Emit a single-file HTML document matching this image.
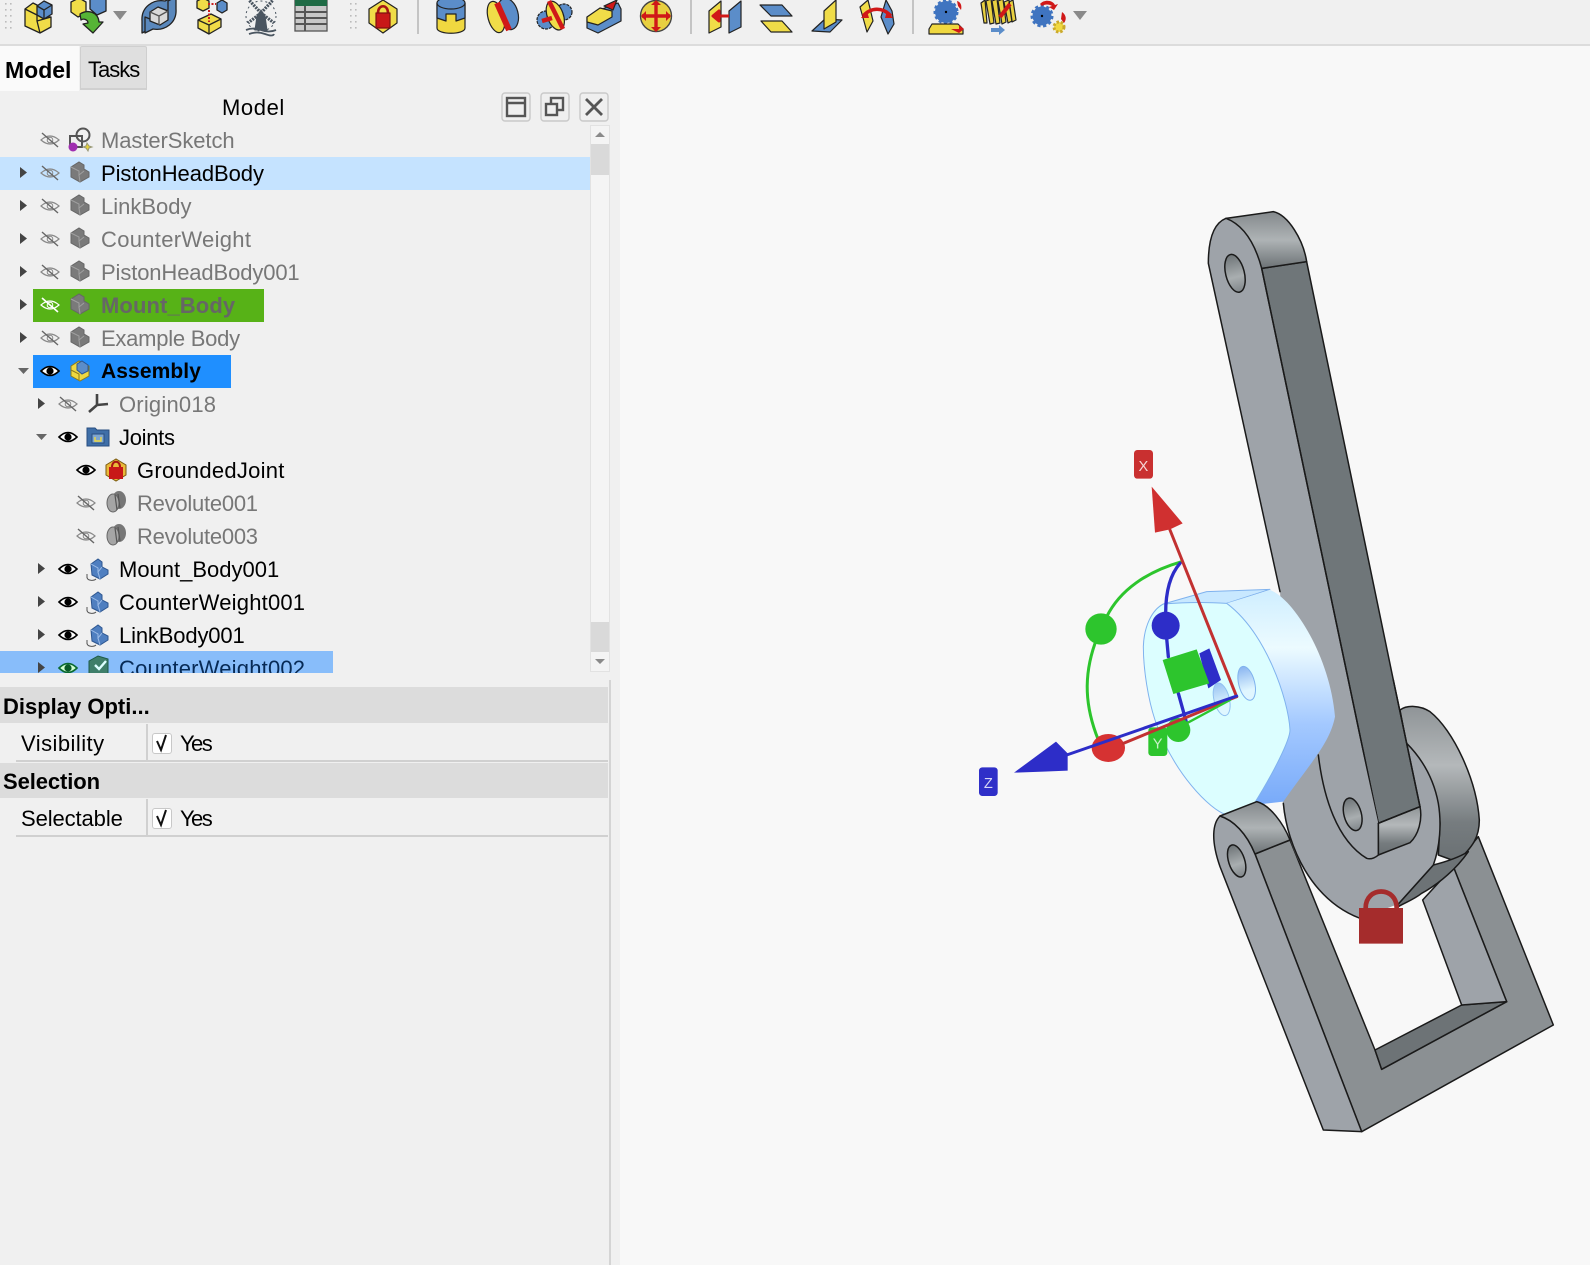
<!DOCTYPE html>
<html><head><meta charset="utf-8"><title>Assembly</title>
<style>
html,body{margin:0;padding:0;background:#f0f0f0}
#root{position:relative;width:1590px;height:1265px;overflow:hidden;background:#f0f0f0;font-family:"Liberation Sans",sans-serif;color:#000}
#root>*{position:absolute}
#view{left:620px;top:46px;width:970px;height:1219px;background:#f8f8f8}
#tbline{left:0;top:44px;width:1590px;height:2px;background:#dcdcdc}
.tab{font-size:22px;line-height:44px}
#tree{left:0;top:124px;width:590px;height:549px;overflow:hidden}
.r{position:absolute;height:33px;line-height:34px;font-size:22px;white-space:nowrap}
.g{color:#777}
svg{overflow:visible}
.pt{font-weight:bold;font-size:22px;left:3px}
.pl{font-size:22px;left:21px}
.cb{width:18px;height:19px;left:152px;background:#fff;border:1px solid #c8c8c8;border-radius:3px}
</style></head><body><div id="root">
<div id="view"></div>
<div id="tbline"></div>

<!-- Toolbar -->
<svg style="left:0;top:0" width="1590" height="44" viewBox="0 0 1590 44">
<defs>
<g id="dots"><g fill="#bbb"><rect x="-3" y="0" width="1.6" height="1.6"/><rect x="2" y="0" width="1.6" height="1.6"/><rect x="-3" y="6" width="1.6" height="1.6"/><rect x="2" y="6" width="1.6" height="1.6"/><rect x="-3" y="12" width="1.6" height="1.6"/><rect x="2" y="12" width="1.6" height="1.6"/><rect x="-3" y="18" width="1.6" height="1.6"/><rect x="2" y="18" width="1.6" height="1.6"/><rect x="-3" y="24" width="1.6" height="1.6"/><rect x="2" y="24" width="1.6" height="1.6"/></g></g>
</defs>
<use href="#dots" x="8" y="3"/><use href="#dots" x="353" y="3"/>
<g fill="#c4c4c4"><rect x="417" y="0" width="2" height="34"/><rect x="690" y="0" width="2" height="34"/><rect x="912" y="0" width="2" height="34"/></g>
<g fill="#8a8a8a"><path d="M113,11h14l-7,9z"/><path d="M1073,11h14l-7,9z"/></g>
<g stroke="#222" stroke-width="1.3" stroke-linejoin="round">
<!-- 1 part -->
<g transform="translate(38,15)"><path d="M-13,-6 L-5,-12 L1,-9 L1,1 L13,2 L13,12 L2,18 L-13,11Z" fill="#f0dc48"/><path d="M-13,-6 L-1,0 L-1,6 L13,2 M-1,6 L2,18" fill="none"/><path d="M-1,-9 L6,-14 L14,-10 L14,-1 L6,4 L-1,0Z" fill="#5b8dc9"/><path d="M-1,-9 L6,-5 L14,-10 M6,-5 V4" fill="none"/></g>
<!-- 2 link -->
<g transform="translate(88,14)"><path d="M-17,-12 L-9,-16 L-2,-12 L-2,-1 L-10,3 L-17,-2Z" fill="#f0dc48"/><path d="M2,-16 L10,-19 L18,-15 L18,-3 L9,1 L2,-5Z" fill="#5b8dc9"/><path d="M-8,0 C0,-5 10,-2 11,8 L15,8 L5,19 L-5,10 L0,9 C0,6 -4,4 -7,6Z" fill="#56b436"/></g>
<!-- 3 sync -->
<g transform="translate(159,15)"><path d="M-17,6 C-18,-8 -6,-16 6,-14 L14,-18 L14,-2 L4,-6 C-4,-7 -9,-1 -9,6 L-9,14 L-17,18Z" fill="#5a88bc"/><path d="M17,-6 C18,8 6,16 -6,14 L-14,18 L-14,2 L-4,6 C4,7 9,1 9,-6 L9,-14 L17,-18Z" fill="#5a88bc"/><path d="M-9,-3 L-1,-8 L9,-4 L9,5 L1,10 L-9,6Z" fill="#d9d9d9"/><path d="M-9,-3 L0,1 L9,-4 M0,1 V10" fill="none" stroke="#555"/></g>
<!-- 4 -->
<g transform="translate(210,15)"><path d="M-13,-14 L-7,-17 L-1,-14 L-1,-7 L-7,-4 L-13,-7Z" fill="#f0dc48"/><path d="M7,-12 L12,-15 L17,-12 L17,-5 L12,-2 L7,-5Z" fill="#5b8dc9"/><path d="M-12,5 L1,-1 L11,4 L11,12 L-1,19 L-12,13Z" fill="#f0dc48"/><path d="M-12,5 L-1,10 L11,4 M-1,10 V19" fill="none"/><path d="M-2,-11 H6 M-1,-5 V7" stroke="#c81e1e" stroke-dasharray="2 1.5" stroke-width="2" fill="none"/></g>
</g>
<!-- 5 windmill -->
<g transform="translate(261,15)" fill="none" stroke="#4a5560"><g stroke-width="3.2"><path d="M0,-2 L-12,-15 M0,-2 L12,-15" stroke-dasharray="2 1"/><path d="M0,-2 L-13,8 M0,-2 L13,8" stroke-dasharray="2 1"/></g><path d="M-4,1 L-6,15 H6 L4,1 L0,-5Z" fill="#4a5560"/><circle r="15" cy="1" stroke-width="1" stroke-dasharray="2 3"/><path d="M-15,15 Q-8,12 0,15 T15,15 M-12,19 Q-4,16 4,19 T13,19" stroke-width="1.8"/></g>
<!-- 6 sheet -->
<g transform="translate(311,15)"><rect x="-16" y="-15" width="32" height="31" fill="#c8c8c8" stroke="#555" stroke-width="1.3"/><rect x="-16" y="-15" width="32" height="6" fill="#1f6b45"/><path d="M-16,-3H16M-16,3H16M-16,9H16M-6,-9V16" stroke="#555" stroke-width="2"/></g>
<g stroke="#222" stroke-width="1.2" stroke-linejoin="round">
<!-- 7 lock -->
<g transform="translate(383,15)"><path d="M-14,-6 L0,-15 L14,-6 L14,8 L0,18 L-14,8Z" fill="#f0dc48"/><path d="M-5,-2 C-5,-11 5,-11 5,-2" fill="none" stroke="#a81414" stroke-width="2.6"/><rect x="-7" y="-2" width="14" height="15" fill="#c81818" stroke="#801010"/></g>
<!-- 8 cylinder -->
<g transform="translate(451,15)"><path d="M-14,-12 L-14,13 C-14,20 14,20 14,13 L14,-12Z" fill="#f0d840"/><path d="M-14,-12 L-14,3 L-5,6 L-5,-1 L5,-1 L5,6 L14,3 L14,-12Z" fill="#5b8dc9"/><ellipse cy="-12" rx="14" ry="6" fill="#5b8dc9"/></g>
<!-- 9 revolute -->
<g transform="translate(502,15)"><ellipse cx="6" cy="-1" rx="10" ry="16" transform="rotate(-15 6 -1)" fill="#5b8dc9"/><ellipse cx="-6" cy="2" rx="8" ry="16" transform="rotate(-15 -6 2)" fill="#f0dc48"/><path d="M-5,-12 L7,15" stroke="#d01818" stroke-width="6"/></g>
<!-- 10 -->
<g transform="translate(554,15)"><circle cx="-8" cy="5" r="9" fill="#5b8dc9" stroke-dasharray="3 1"/><circle cx="10" cy="-3" r="8" fill="#5b8dc9" stroke-dasharray="3 1"/><ellipse cx="1" cy="1" rx="8" ry="15" transform="rotate(-20)" fill="#f0dc48"/><path d="M-5,-14 L9,14 M-12,6 L-2,3" stroke="#d01818" stroke-width="4.5"/></g>
<!-- 11 slider -->
<g transform="translate(604,15)"><path d="M-17,2 L-2,-6 L14,-12 L17,-6 L17,6 L-6,18 L-17,13Z" fill="#5b8dc9"/><path d="M-17,2 L-4,-7 L8,-4 L8,2 L-6,10 L-17,7Z" fill="#f0dc48"/><path d="M0,-9 L13,-15 L9,-5Z" fill="#d01818"/></g>
<!-- 12 ball -->
<g transform="translate(656,15)"><circle r="15.5" cy="1" fill="#e8d040" stroke="#444" stroke-width="1.4"/><path d="M-14,1H14M0,-13V15" stroke="#d01818" stroke-width="3.4" fill="none"/><path d="M-15,1l5,-5v10zM15,1l-5,-5v10zM0,-15l-5,5h10zM0,17l-5,-5h10z" fill="#d01818" stroke="none"/></g>
<!-- 13 distance -->
<g transform="translate(725,15)"><path d="M-16,-4 L-4,-14 L-4,12 L-16,18Z" fill="#f0dc48"/><path d="M4,-4 L16,-14 L16,12 L4,18Z" fill="#5b8dc9"/><path d="M-12,1H4M-12,1l6,-5v10z" stroke="#d01818" stroke-width="3" fill="#d01818"/></g>
<!-- 14 parallel -->
<g transform="translate(776,15)"><path d="M-16,-10 H6 L16,1 H-5Z" fill="#5b8dc9"/><path d="M-16,4 H5 L15,15 H-6Z" fill="#f0dc48" transform="translate(1,2)"/></g>
<!-- 15 perpendicular -->
<g transform="translate(826,15)"><path d="M-14,16 L-1,4 L16,5 L4,17Z" fill="#5b8dc9"/><path d="M-2,-4 L10,-15 L10,7 L-2,14Z" fill="#f0dc48"/></g>
<!-- 16 angle -->
<g transform="translate(877,15)"><path d="M-17,-8 L-9,-15 L-4,6 L-10,17Z" fill="#f0dc48"/><path d="M9,-15 L15,-4 L17,9 L11,19 L4,2Z" fill="#5b8dc9"/><path d="M-14,1 C-6,-8 6,-8 14,1" stroke="#d01818" stroke-width="3.4" fill="none"/><path d="M-16,3l6,-7 2,7zM16,3l-6,-7 -2,7z" fill="#d01818" stroke="none"/></g>
<!-- 17 rack -->
<g transform="translate(946,15)"><circle cy="-3" r="11" fill="#3f74c0" stroke="#3f74c0" stroke-width="3" stroke-dasharray="3 2.4"/><circle cy="-3" r="1.2" fill="#000" stroke="none"/><path d="M-17,14 L-14,9 H12 L17,14 V19 H-17Z" fill="#f0d840"/><path d="M5,14 H13 V10 L18,14 L13,18Z" fill="#d01818" stroke="none"/><path d="M11,-14 C15,-13 16,-9 15,-5 L12,-9Z" fill="#d01818" stroke="none"/></g>
<!-- 18 screw -->
<g transform="translate(998,15)"><path d="M-17,-12 L-13,-15 L-11,8 L-14,8Z M-12,-14 L-7,-16 L-4,8 L-8,9Z M-6,-14 L-1,-16 L2,8 L-2,9Z M0,-14 L5,-16 L8,7 L4,9Z M6,-13 L11,-15 L14,6 L10,8Z M11,-13 L15,-15 L18,5 L14,7Z" fill="#e8d040"/><path d="M2,2 L12,-11" stroke="#d01818" stroke-width="4"/><path d="M-7,13 H1 V10 L7,15 L1,20 V17 H-7Z" fill="#5b8dc9" stroke="none"/></g>
<!-- 19 gears -->
<g transform="translate(1049,15)"><circle cx="-7" cy="1" r="9.5" fill="#3f74c0" stroke="#3f74c0" stroke-width="4" stroke-dasharray="3 2.4"/><circle cx="-7" cy="1" r="1.2" fill="#000" stroke="none"/><circle cx="10" cy="12" r="5" fill="#f0d840" stroke="#caa92c" stroke-width="3" stroke-dasharray="2.4 1.8"/><path d="M-9,-11 C-5,-16 4,-15 6,-10 L9,-11 L5,-5 L0,-8 L3,-9 C0,-11 -4,-11 -7,-9Z" fill="#d01818" stroke="none"/><path d="M13,-3 C17,0 18,4 15,8 L12,4Z" fill="#d01818" stroke="none"/></g>
</g>
</svg>

<!-- Tabs -->
<div style="left:0;top:46px;width:79px;height:45px;background:#fafafa"></div>
<div style="left:80px;top:46px;width:67px;height:44px;background:#dfdfdf;border:1px solid #cfcfcf;border-bottom:2px solid #d0d0d0;box-sizing:border-box;border-radius:2px 2px 0 0"></div>
<div class="tab" style="left:5px;top:48px;font-weight:bold;font-size:23px">Model</div>
<div class="tab" style="left:88px;top:48px;letter-spacing:-1px">Tasks</div>
<div style="left:222px;top:92px;font-size:22px;line-height:32px;letter-spacing:.6px">Model</div>

<!-- dock buttons -->
<svg style="left:500px;top:90px" width="112" height="34" viewBox="500 90 112 34">
<g fill="#efefef" stroke="#c9c9c9" stroke-width="1.4"><rect x="502" y="93" width="28" height="28" rx="3"/><rect x="541" y="93" width="28" height="28" rx="3"/><rect x="580" y="93" width="28" height="28" rx="3"/></g>
<g fill="none" stroke="#555" stroke-width="2.4"><rect x="507" y="98" width="18" height="18"/><path d="M507,103H525"/><rect x="551" y="98" width="12" height="12"/><rect x="546" y="104" width="11" height="11" fill="#efefef"/><path d="M586,99L602,115M602,99L586,115" stroke-width="2.8"/></g>
</svg>

<!-- tree -->
<svg width="0" height="0" style="left:0;top:0">
<defs>
<symbol id="eye" viewBox="-10 -8 20 16" overflow="visible"><path d="M-9,0 Q0,-9 9,0 Q0,9 -9,0Z" fill="#fff" stroke="#000" stroke-width="1.6"/><circle r="3.6" fill="#000"/></symbol>
<symbol id="eyex" viewBox="-10 -8 20 16" overflow="visible"><path d="M-9,0 Q0,-8 9,0 Q0,8 -9,0Z" fill="none" stroke="#888" stroke-width="1.2"/><circle r="2.8" fill="none" stroke="#888"/><path d="M-8,-7 L8,7" stroke="#666" stroke-width="1.4"/></symbol>
<symbol id="body" viewBox="-10 -11 20 22" overflow="visible"><path d="M-9,-5 L-1,-10 L4,-7 L4,-3 L9,0 L9,5 L0,10 L-9,5Z" fill="#7a7a7a" stroke="#666"/><path d="M-9,-5 L-1,-1 L-1,3 L4,-1 M-1,3 L0,10" stroke="#a0a0a0" fill="none"/></symbol>
<symbol id="blue" viewBox="-12 -11 24 22" overflow="visible"><path d="M-7,-5 L0,-10 L4,-7 L4,-2 L10,1 L10,5 L2,10 L-6,6Z" fill="#4f7fc0" stroke="#2d5690"/><path d="M-7,-5 L0,-1 L0,3 L4,-2 M0,3 L2,10" stroke="#9dbde8" fill="none"/><path d="M-11,8 C-11,12 -4,12 -2,10" stroke="#555" fill="none"/><path d="M-11,5 V9" stroke="#555"/></symbol>
<symbol id="rev" viewBox="-11 -11 22 22" overflow="visible"><ellipse cx="3" cy="-2" rx="7" ry="9" fill="#777"/><ellipse cx="-3" cy="1" rx="6" ry="9" fill="#a5a5a5" stroke="#666"/><path d="M-1,-7 L1,8 M2,-8 L4,6" stroke="#555" stroke-width="1.2"/></symbol>
</defs></svg>

<div id="tree">
<div class="r" style="left:0;top:33px;width:590px;background:#c5e3ff"></div>
<div class="r" style="left:33px;top:165px;width:231px;background:#57b217"></div>
<div class="r" style="left:33px;top:231px;width:198px;background:#1f8fff"></div>
<div class="r" style="left:0;top:527px;width:333px;background:#88bdfa"></div>

<svg style="position:absolute;left:0;top:0" width="590" height="560">
<!-- arrows -->
<g fill="#444" transform="translate(0,1)"><path d="M20,42l7,5.5l-7,5.5zM20,75l7,5.5l-7,5.5zM20,108l7,5.5l-7,5.5zM20,141l7,5.5l-7,5.5zM20,174l7,5.5l-7,5.5zM20,207l7,5.5l-7,5.5z"/><path d="M18,243h11l-5.5,6z" fill="#666"/><path d="M38,273l7,5.5l-7,5.5z"/><path d="M36,309h11l-5.5,6z" fill="#666"/><path d="M38,438l7,5.5l-7,5.5zM38,471l7,5.5l-7,5.5zM38,504l7,5.5l-7,5.5zM38,537l7,5.5l-7,5.5z"/></g>
<!-- eyes -->
<g transform="translate(-1,0)">
<use href="#eyex" x="41" y="8" width="20" height="16"/>
<use href="#eyex" x="41" y="41" width="20" height="16"/>
<use href="#eyex" x="41" y="74" width="20" height="16"/>
<use href="#eyex" x="41" y="107" width="20" height="16"/>
<use href="#eyex" x="41" y="140" width="20" height="16"/>
<g transform="translate(51,181)"><path d="M-9,0 Q0,-8 9,0 Q0,8 -9,0Z" fill="none" stroke="#fff" stroke-width="1.2"/><circle r="2.8" fill="none" stroke="#fff"/><path d="M-8,-7 L8,7" stroke="#fff" stroke-width="1.6"/></g>
<use href="#eyex" x="41" y="206" width="20" height="16"/>
<use href="#eye" x="41" y="239" width="20" height="16"/>
<use href="#eyex" x="59" y="272" width="20" height="16"/>
<use href="#eye" x="59" y="305" width="20" height="16"/>
<use href="#eye" x="77" y="338" width="20" height="16"/>
<use href="#eyex" x="77" y="371" width="20" height="16"/>
<use href="#eyex" x="77" y="404" width="20" height="16"/>
<use href="#eye" x="59" y="437" width="20" height="16"/>
<use href="#eye" x="59" y="470" width="20" height="16"/>
<use href="#eye" x="59" y="503" width="20" height="16"/>
<g transform="translate(69,544)"><path d="M-9,0 Q0,-9 9,0 Q0,9 -9,0Z" fill="#d0ffd0" stroke="#0a6a30" stroke-width="1.6"/><circle r="3.6" fill="#0a5a28"/></g>
</g>
<!-- icons -->
<g transform="translate(80,15)"><rect x="-10" y="-3" width="12" height="11" fill="none" stroke="#555" stroke-width="2"/><circle cx="3" cy="-4" r="6.5" fill="none" stroke="#555" stroke-width="2"/><circle cx="-7" cy="8" r="4.5" fill="#a02fb0"/><path d="M7,4 l2,3 3,1 -3,1 -1,3 -2,-3 -3,-1 3,-1z" fill="#e6d23a" stroke="#997"/></g>
<use href="#body" x="70" y="37" width="20" height="22"/>
<use href="#body" x="70" y="70" width="20" height="22"/>
<use href="#body" x="70" y="103" width="20" height="22"/>
<use href="#body" x="70" y="136" width="20" height="22"/>
<use href="#body" x="70" y="169" width="20" height="22"/>
<use href="#body" x="70" y="202" width="20" height="22"/>
<g transform="translate(80,247)"><path d="M-9,-5 L-1,-10 L9,-5 L9,5 L0,10 L-9,5Z" fill="#efd840" stroke="#8a7a20"/><path d="M-3,-7 L2,-10 L8,-6 L8,0 L2,3 L-3,-1Z" fill="#5b8dc9" stroke="#2d5690"/><path d="M-9,-1 L-1,3 L-1,9" fill="none" stroke="#8a7a20"/></g>
<g transform="translate(98,280)" stroke="#444" stroke-width="2.6" fill="none"><path d="M-1,-10 V1 L10,0 M-1,1 L-9,8"/></g>
<g transform="translate(98,313)"><path d="M-11,-9 H-3 L-1,-7 H11 V9 H-11Z" fill="#3f6fa8" stroke="#284e80"/><rect x="-6" y="-3" width="12" height="9" fill="#7ea6cf" stroke="#284e80"/><path d="M-3,0 V4 H3 V0" fill="none" stroke="#efd840" stroke-width="1.4"/></g>
<g transform="translate(116,346)"><path d="M-10,-5 L0,-11 L10,-5 L10,5 L0,11 L-10,5Z" fill="#eab93a" stroke="#7a5a10"/><path d="M-4,-3 C-4,-10 4,-10 4,-3" fill="none" stroke="#a81414" stroke-width="2"/><rect x="-7" y="-3" width="14" height="12" fill="#c81818"/></g>
<use href="#rev" x="105" y="367" width="22" height="22"/>
<use href="#rev" x="105" y="400" width="22" height="22"/>
<use href="#blue" x="86" y="434" width="24" height="22"/>
<use href="#blue" x="86" y="467" width="24" height="22"/>
<use href="#blue" x="86" y="500" width="24" height="22"/>
<g transform="translate(98,543)"><path d="M-9,-6 L0,-11 L10,-8 L10,8 L-9,8Z" fill="#3f7f6a" stroke="#1d5a48"/><path d="M-3,-2 L1,2 L8,-6" stroke="#dff" stroke-width="2.4" fill="none"/></g>
</svg>

<div class="r g" style="left:101px;top:0;letter-spacing:-.08px">MasterSketch</div>
<div class="r" style="left:101px;top:33px;letter-spacing:-.07px">PistonHeadBody</div>
<div class="r g" style="left:101px;top:66px">LinkBody</div>
<div class="r g" style="left:101px;top:99px;letter-spacing:.3px">CounterWeight</div>
<div class="r g" style="left:101px;top:132px;letter-spacing:-.12px">PistonHeadBody001</div>
<div class="r" style="left:101px;top:165px;font-weight:bold;color:#666;letter-spacing:.1px">Mount_Body</div>
<div class="r g" style="left:101px;top:198px;letter-spacing:-.25px">Example Body</div>
<div class="r" style="left:101px;top:231px;font-weight:bold;font-size:21px;letter-spacing:.1px">Assembly</div>
<div class="r g" style="left:119px;top:264px;letter-spacing:.2px">Origin018</div>
<div class="r" style="left:119px;top:297px;letter-spacing:-.3px">Joints</div>
<div class="r" style="left:137px;top:330px;letter-spacing:.25px">GroundedJoint</div>
<div class="r g" style="left:137px;top:363px;letter-spacing:-.25px">Revolute001</div>
<div class="r g" style="left:137px;top:396px;letter-spacing:-.25px">Revolute003</div>
<div class="r" style="left:119px;top:429px">Mount_Body001</div>
<div class="r" style="left:119px;top:462px;letter-spacing:.2px">CounterWeight001</div>
<div class="r" style="left:119px;top:495px;letter-spacing:-.15px">LinkBody001</div>
<div class="r" style="left:119px;top:528px;color:#072a55;letter-spacing:.2px">CounterWeight002</div>
</div>

<!-- scrollbar -->
<div style="left:590px;top:125px;width:20px;height:547px;background:#f4f4f4;border:1px solid #e2e2e2;box-sizing:border-box"></div>
<div style="left:591px;top:144px;width:18px;height:31px;background:#d9d9d9"></div>
<div style="left:591px;top:622px;width:18px;height:30px;background:#d9d9d9"></div>
<svg style="left:590px;top:125px" width="20" height="547"><path d="M5,12h10l-5,-5zM5,534h10l-5,5z" fill="#8a8a8a"/></svg>

<!-- properties -->
<div style="left:609px;top:680px;width:2px;height:585px;background:#d4d4d4"></div>
<div style="left:0;top:687px;width:608px;height:36px;background:#dcdcdc"></div>
<div style="left:0;top:763px;width:608px;height:35px;background:#dcdcdc"></div>
<div style="left:16px;top:760px;width:592px;height:2px;background:#d0d0d0"></div>
<div style="left:16px;top:835px;width:592px;height:2px;background:#d0d0d0"></div>
<div style="left:146px;top:724px;width:2px;height:37px;background:#d0d0d0"></div>
<div style="left:146px;top:799px;width:2px;height:37px;background:#d0d0d0"></div>
<div class="pt" style="top:692px;line-height:30px">Display Opti...</div>
<div class="pt" style="top:767px;line-height:30px;letter-spacing:-.1px">Selection</div>
<div class="pl" style="top:729px;line-height:30px;letter-spacing:.45px">Visibility</div>
<div class="pl" style="top:804px;line-height:30px;letter-spacing:-.1px">Selectable</div>
<div class="cb" style="top:733px"></div><div class="cb" style="top:808px"></div>
<svg style="left:150px;top:730px" width="24" height="100"><g fill="none" stroke="#111" stroke-width="2"><path d="M7,11 L11,20 L16,5"/><path d="M7,86 L11,95 L16,80"/></g></svg>
<div style="left:180px;top:729px;font-size:22px;line-height:30px;letter-spacing:-1.6px">Yes</div>
<div style="left:180px;top:804px;font-size:22px;line-height:30px;letter-spacing:-1.6px">Yes</div>

<!-- 3D view -->
<svg style="left:0;top:0" width="1590" height="1265" viewBox="0 0 1590 1265">
<defs>
<linearGradient id="cap" x1="0" y1="0" x2="0" y2="1"><stop offset="0" stop-color="#84898c"/><stop offset=".5" stop-color="#aeb3b5"/><stop offset="1" stop-color="#6c7275"/></linearGradient>
<linearGradient id="rim" x1="0" y1="0" x2="0" y2="1"><stop offset="0" stop-color="#8f9497"/><stop offset=".38" stop-color="#b4b8ba"/><stop offset=".75" stop-color="#767c7f"/><stop offset="1" stop-color="#6a7073"/></linearGradient>
<linearGradient id="hole" x1="0" y1="0" x2="0" y2="1"><stop offset="0" stop-color="#6e7477"/><stop offset=".6" stop-color="#a9aeb0"/><stop offset="1" stop-color="#80868a"/></linearGradient>
<linearGradient id="wrim" x1="0" y1="0" x2="0" y2="1"><stop offset="0" stop-color="#cfeeff"/><stop offset=".27" stop-color="#ecfbff"/><stop offset=".62" stop-color="#a4c9ff"/><stop offset="1" stop-color="#78aaf9"/></linearGradient>
<linearGradient id="whole" x1="0" y1="0" x2="0" y2="1"><stop offset="0" stop-color="#8ab5f0"/><stop offset=".7" stop-color="#e0f6ff"/></linearGradient>
</defs>
<g transform="translate(1190,200) scale(.33333)" stroke="#1a1a1a" stroke-width="4.5" stroke-linejoin="round" stroke-linecap="round">

<!-- yoke (z8) -->
<g transform="translate(0,1440)">
<path d="M195,522 L300,480 L555,1110 L575,1168 L950,965 L790,560 L865,470 L1090,1035 L515,1355Z" fill="#8b9093"/>
<path d="M555,1110 L815,975 L950,965 L575,1168Z" fill="#6d7376"/>
<path d="M698,660 L790,560 L950,965 L815,975Z" fill="#9ea3a9"/>
</g>

<!-- big plate + rim (z8) -->
<g transform="translate(0,1440)">
<path d="M630,90 C650,75 690,75 720,95 C790,150 860,300 868,420 C868,470 850,500 800,545 L745,525 L750,430 C745,330 700,250 650,195Z" fill="url(#rim)"/>
<path d="M625,672 L730,555 C770,545 810,530 835,515 C800,565 750,610 695,640 C670,660 640,670 625,680Z" fill="#6d7376"/>
<path d="M278,370 C290,500 360,660 510,715 L625,672 L730,555 C750,500 755,430 745,370 C730,290 690,230 650,190 L600,-50 L300,200Z" fill="#9ea3a9" stroke="none"/>
<path d="M280,370 C292,500 365,660 510,715" fill="none"/>
<path d="M625,672 L730,555 C750,500 755,430 745,370 C730,290 690,230 650,190" fill="none"/>
</g>

<!-- upper link (z7) -->
<path d="M108,55 C70,70 55,120 55,190 L270,1175 L300,1660 L560,1960 L565,1870 L475,1440 L215,205 C195,130 160,75 108,55Z" fill="#9ea3a9" stroke="none"/>
<path d="M215,205 L350,185 L610,1440 L690,1820 L565,1870 L475,1440Z" fill="#6f7679"/>
<path d="M108,55 C70,70 55,120 55,190 L270,1175" fill="none"/>
<path d="M215,205 L475,1440 L565,1870" fill="none"/>
<path d="M108,55 L250,35 C295,45 340,120 350,185 L215,205 C195,130 160,75 108,55Z" fill="url(#cap)"/>
<ellipse cx="135" cy="220" rx="28" ry="58" transform="rotate(-14 135 220)" fill="url(#hole)"/>
<g transform="translate(0,1440)">
<path d="M565,430 L690,380 C698,420 685,465 660,488 L565,525Z" fill="url(#rim)"/>
<path d="M385,225 C400,350 440,480 530,535 C545,540 560,530 565,525 L565,430 L470,0 L380,100Z" fill="#9ea3a9" stroke="none"/>
<path d="M385,225 C400,350 440,480 530,535 C545,540 560,530 565,525 L565,430" fill="none"/>
<path d="M565,430 L690,380 M610,0 L690,380" fill="none"/>
<ellipse cx="488" cy="403" rx="26" ry="50" transform="rotate(-15 488 403)" fill="url(#hole)"/>
</g>

<!-- wheel + gizmo (z6) -->
<g transform="translate(-690,720)" stroke="#7fb2ee" stroke-width="3">
<path d="M610,492 L740,455 L930,448 L800,490Z" fill="#c8e8ff"/>
<path d="M800,490 L930,450 C1000,475 1110,650 1125,830 C1110,910 1050,970 970,1085 L880,1095 C940,1000 990,900 990,870 C985,780 920,580 800,490Z" fill="url(#wrim)" stroke="none"/>
<path d="M610,492 C700,485 760,488 800,490 C920,580 985,780 990,870 C990,900 940,1000 880,1095 L800,1125 C750,1110 640,1000 585,840 C565,780 550,690 550,620 C552,560 575,510 610,492Z" fill="#dcfeff"/>
<ellipse cx="860" cy="730" rx="24" ry="52" transform="rotate(-14 860 730)" fill="url(#whole)"/>
<ellipse cx="785" cy="778" rx="23" ry="50" transform="rotate(-14 785 778)" fill="url(#whole)" opacity=".8"/>
<g stroke="none">
<path d="M665,365 C560,395 480,450 440,530" fill="none" stroke="#2dc52d" stroke-width="9"/>
<path d="M405,610 C370,710 375,800 415,900" fill="none" stroke="#2dc52d" stroke-width="9"/>
<circle cx="423" cy="567" r="47" fill="#2dc52d"/>
<path d="M660,370 C625,410 617,470 617,520 M620,595 L625,650 M655,760 L680,850" fill="none" stroke="#2d2dc8" stroke-width="10"/>
<circle cx="617" cy="557" r="42" fill="#2d2dc8"/>
<path d="M718,640 L748,625 L783,720 L745,745Z" fill="#2d2dc8"/>
<path d="M608,660 L710,628 L748,730 L640,762Z" fill="#2dc52d"/>
<circle cx="655" cy="870" r="36" fill="#2dc52d"/>
<rect x="565" y="862" width="57" height="86" rx="10" fill="#2dc52d"/>
<text x="593" y="925" font-family="Liberation Sans" font-size="44" fill="#c7f0c7" text-anchor="middle">Y</text>
<ellipse cx="445" cy="924" rx="50" ry="42" fill="#d63232"/>
<path d="M830,770 L630,270" fill="none" stroke="#c23131" stroke-width="9"/>
<path d="M830,770 L490,910" fill="none" stroke="#c23131" stroke-width="9"/>
<path d="M810,780 L680,850" fill="none" stroke="#2dc52d" stroke-width="7"/>
<path d="M830,768 L320,945" fill="none" stroke="#2d2dc8" stroke-width="9"/>
<path d="M575,140 L668,250 L630,268 L585,278Z" fill="#d03030"/>
<path d="M162,998 L288,905 L323,940 L323,992 L250,995Z" fill="#2d2dc8"/>
<rect x="522" y="30" width="57" height="86" rx="10" fill="#c93030"/>
<text x="550" y="93" font-family="Liberation Sans" font-size="44" fill="#f5d5d5" text-anchor="middle">X</text>
<rect x="57" y="982" width="56" height="86" rx="10" fill="#2f2fc8"/>
<text x="85" y="1044" font-family="Liberation Sans" font-size="44" fill="#d5d5f5" text-anchor="middle">Z</text>
</g>
</g>

<!-- yoke left arm on top (z8) -->
<g transform="translate(0,1440)">
<path d="M90,408 C68,430 62,480 90,560 L400,1350 L515,1355 L195,522 C170,460 130,420 90,408Z" fill="#9ea3a9"/>
<path d="M90,408 L200,365 C240,375 280,430 300,480 L195,522 C170,460 130,420 90,408Z" fill="url(#cap)"/>
<ellipse cx="140" cy="543" rx="24" ry="50" transform="rotate(-18 140 543)" fill="url(#hole)"/>
<g stroke="none">
<path d="M507,684 H639 V791 H507Z" fill="#a52c2c"/>
<path d="M527,684 C527,618 620,618 620,684" fill="none" stroke="#a52c2c" stroke-width="14"/>
</g>
</g>
</g>
</svg>
</div></body></html>
